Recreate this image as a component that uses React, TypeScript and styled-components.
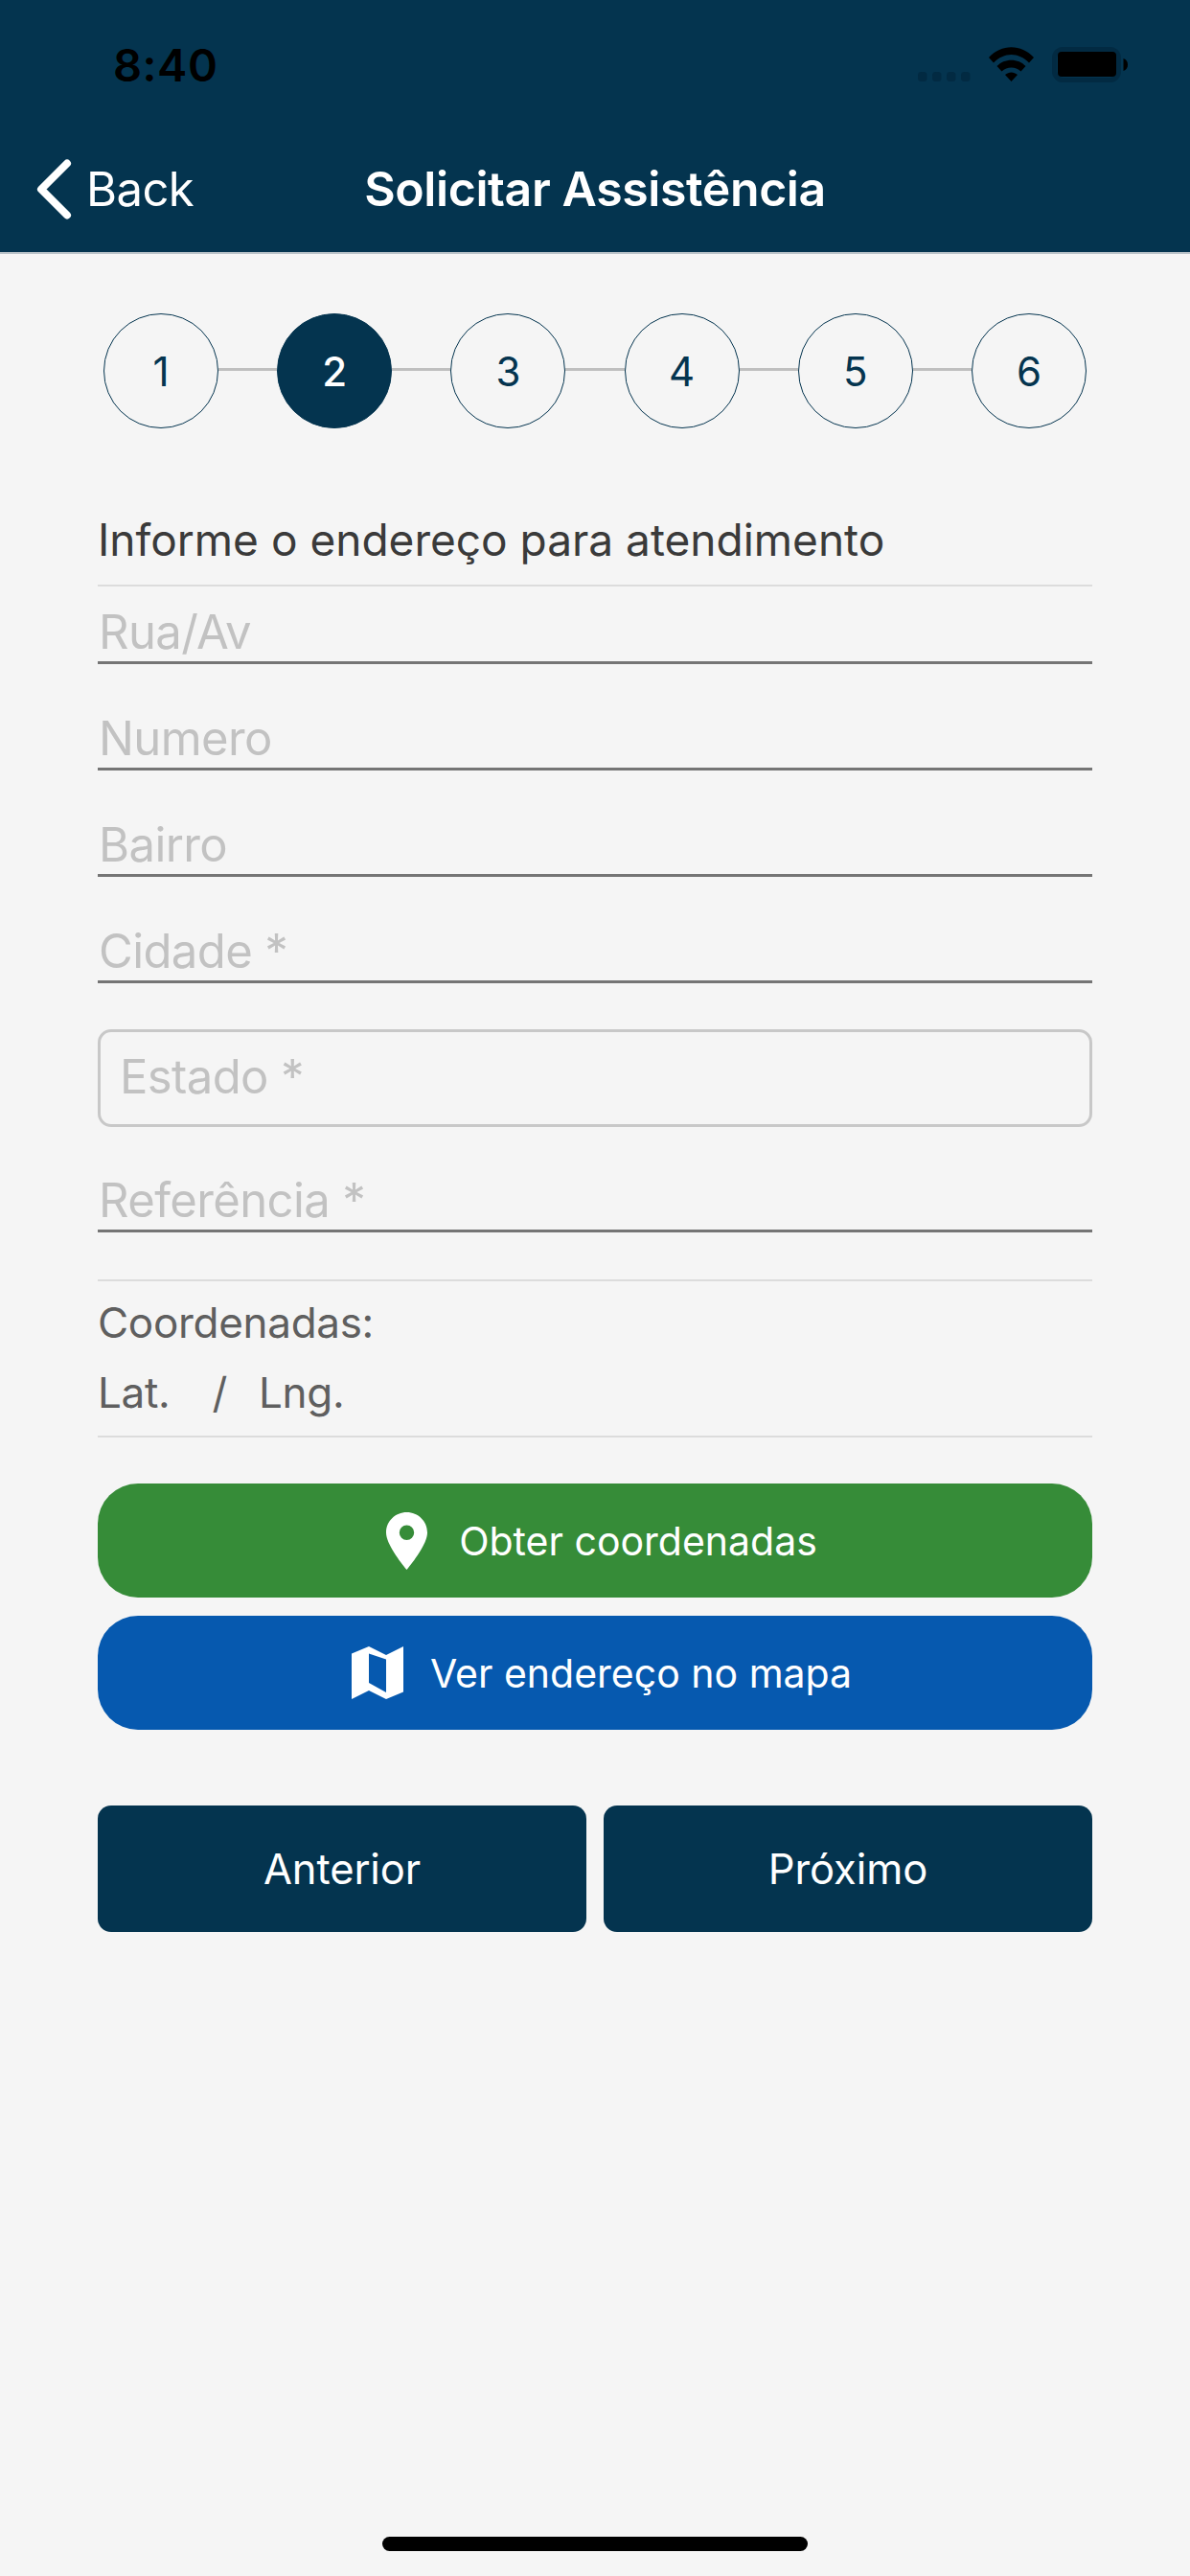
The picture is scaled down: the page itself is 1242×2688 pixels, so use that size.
import React from "react";
import styled, { createGlobalStyle } from "styled-components";

const Global = createGlobalStyle`
  html, body { margin: 0; padding: 0; background: #f5f5f5; }
  * { box-sizing: border-box; }
  body { font-family: Inter, "Liberation Sans", sans-serif; }
`;

const Screen = styled.div`
  position: relative;
  width: 1242px;
  height: 2688px;
  background: #f5f5f5;
  overflow: hidden;
  display: flex;
  flex-direction: column;
`;

const Header = styled.header`
  height: 265px;
  background: #04344f;
  border-bottom: 2px solid #b9c2c8;
  display: flex;
  flex-direction: column;
`;

const StatusBar = styled.div`
  height: 132px;
  display: flex;
  align-items: flex-start;
  justify-content: space-between;
  padding: 42px 65px 0 118px;
`;

const Clock = styled.span`
  font-size: 47px;
  line-height: 52px;
  font-weight: 600;
  color: #000;
  letter-spacing: 0.5px;
`;

const StatusIcons = styled.div`
  display: flex;
  align-items: flex-start;
  padding-top: 7px;
`;

const NavBar = styled.div`
  position: relative;
  display: flex;
  align-items: center;
  height: 132px;
  padding: 0 0 0 38px;
`;

const BackLink = styled.div`
  display: flex;
  align-items: center;
  gap: 15px;
  color: #fff;
  font-size: 49px;
  letter-spacing: -0.6px;
  font-weight: 400;
`;

const NavTitle = styled.div`
  position: absolute;
  left: 0;
  right: 0;
  text-align: center;
  color: #fff;
  font-size: 50px;
  font-weight: 600;
  letter-spacing: -0.4px;
`;

const Body = styled.main`
  padding: 62px 102px 0;
  display: flex;
  flex-direction: column;
`;

const Stepper = styled.ol`
  list-style: none;
  margin: 0 0 0 6px;
  padding: 0;
  display: flex;
  align-items: center;
`;

const StepCircle = styled.li<{ $active?: boolean }>`
  width: 120px;
  height: 120px;
  flex: none;
  border-radius: 50%;
  border: 1.5px solid #04344f;
  background: ${(p) => (p.$active ? "#04344f" : "transparent")};
  color: ${(p) => (p.$active ? "#fff" : "#04344f")};
  font-size: 42px;
  font-weight: ${(p) => (p.$active ? 500 : 400)};
  display: flex;
  align-items: center;
  justify-content: center;
`;

const StepLine = styled.li`
  width: 61.2px;
  height: 3px;
  margin-top: -3px;
  flex: none;
  background: #bfbfbf;
`;

const Heading = styled.h2`
  margin: 88px 0 0;
  height: 77px;
  padding-bottom: 20px;
  display: flex;
  align-items: flex-end;
  font-size: 46px;
  line-height: 54px;
  font-weight: 400;
  color: #3a3a3a;
  border-bottom: 2px solid #dcdcdc;
  letter-spacing: 0;
  white-space: nowrap;
`;

const UnderlineField = styled.div<{ $gap: number; $first?: boolean }>`
  height: ${(p) => (p.$first ? 81 : 80)}px;
  margin-top: ${(p) => p.$gap}px;
  padding: 0 0 0 1px;
  display: flex;
  align-items: flex-end;
  border-bottom: 3px solid #757575;
  font-size: 49px;
  line-height: 60px;
  color: #c2c2c2;
  letter-spacing: -0.6px;
`;

const BoxField = styled.div`
  height: 102px;
  margin-top: 48px;
  padding: 0 20px 3px;
  display: flex;
  align-items: center;
  border: 3px solid #c8c8c8;
  border-radius: 14px;
  font-size: 49px;
  color: #c2c2c2;
  letter-spacing: -0.6px;
`;

const CoordBlock = styled.section`
  margin-top: 49px;
  height: 165px;
  padding-top: 15px;
  border-top: 2px solid #dcdcdc;
  border-bottom: 2px solid #dcdcdc;
  display: flex;
  flex-direction: column;
  gap: 17px;
  font-size: 44px;
  line-height: 56px;
  color: #5f5f5f;
  letter-spacing: -0.3px;
`;

const CoordRow = styled.div`
  display: flex;
`;

const CoordSlash = styled.span`
  margin: 0 33px 0 44px;
`;

const ActionButton = styled.div<{ $color: string; $gap: number; $iconGap: number }>`
  height: 119px;
  margin-top: ${(p) => p.$gap}px;
  padding-left: 14px;
  background: ${(p) => p.$color};
  border-radius: 42px;
  display: flex;
  align-items: center;
  justify-content: center;
  gap: ${(p) => p.$iconGap}px;
  color: #fff;
  font-size: 41px;
  letter-spacing: 0;
`;

const NavButtons = styled.div`
  margin-top: 79px;
  display: grid;
  grid-template-columns: 1fr 1fr;
  gap: 18px;
`;

const NavButton = styled.div`
  height: 132px;
  background: #04344f;
  border-radius: 14px;
  color: #fff;
  font-size: 43.5px;
  letter-spacing: -0.1px;
  display: flex;
  align-items: center;
  justify-content: center;
`;

const HomeIndicator = styled.div`
  position: absolute;
  left: 399px;
  bottom: 26px;
  width: 444px;
  height: 15px;
  border-radius: 8px;
  background: #000;
`;

const Chevron = () => (
  <svg width="37" height="63" viewBox="0 0 37 63">
    <path d="M32 4.5 5 31.5l27 27" fill="none" stroke="#fff" strokeWidth="8" strokeLinecap="round" strokeLinejoin="round" />
  </svg>
);

const StatusGlyphs = () => (
  <svg width="219" height="37" viewBox="0 0 219 37">
    <g fill="#022a42">
      <rect x="0" y="26" width="9.5" height="10" rx="3.5" />
      <rect x="15" y="26" width="9.5" height="10" rx="3.5" />
      <rect x="30" y="26" width="9.5" height="10" rx="3.5" />
      <rect x="45" y="26" width="9.5" height="10" rx="3.5" />
    </g>
    <path
      d="M74 11C87-3.5 108-3.5 121 11l-5 5.5C105 5 90 5 79 16.5ZM82.500 20C90 11.500 105 11.500 112.500 20l-5 5.500C102 20 93 20 87.500 25.500ZM91 29c4-3.500 9-3.500 13 0l-6.500 7Z"
      fill="#000"
    />
    <rect x="142.500" y="2.500" width="67" height="32" rx="9" fill="none" stroke="#022a42" strokeWidth="5" />
    <rect x="146" y="5" width="61" height="26" rx="4" fill="#000" />
    <path d="M214.500 12c3 1 4.500 3.500 4.500 6.500s-1.500 5.500-4.500 6.500Z" fill="#000" />
  </svg>
);

const Pin = () => (
  <svg width="43" height="60" viewBox="0 0 43 60">
    <path
      fillRule="evenodd"
      fill="#fff"
      d="M21.5 0C33.4 0 43 9.3 43 21.2 43 33 28 52 21.5 60 15 52 0 33 0 21.2 0 9.3 9.6 0 21.5 0Zm0 13.5a7.7 7.7 0 1 0 0 15.4 7.7 7.7 0 0 0 0-15.4Z"
    />
  </svg>
);

const MapIcon = () => (
  <svg width="54" height="55" viewBox="0 0 54 55">
    <path
      fillRule="evenodd"
      fill="#fff"
      d="M0 7.5 18 0l18 9L54 0v47.5L36 55l-18-9L0 55ZM18 7.5V38l18 10V13.5Z"
    />
  </svg>
);

const steps = [1, 2, 3, 4, 5, 6];
const upperFields = ["Rua/Av", "Numero", "Bairro", "Cidade *"];

export default function App() {
  return (
    <Screen>
      <Global />
      <Header>
        <StatusBar>
          <Clock>8:40</Clock>
          <StatusIcons>
            <StatusGlyphs />
          </StatusIcons>
        </StatusBar>
        <NavBar>
          <BackLink>
            <Chevron />
            Back
          </BackLink>
          <NavTitle>Solicitar Assistência</NavTitle>
        </NavBar>
      </Header>
      <Body>
        <Stepper>
          {steps.map((n) => (
            <React.Fragment key={n}>
              <StepCircle $active={n === 2}>{n}</StepCircle>
              {n < 6 && <StepLine />}
            </React.Fragment>
          ))}
        </Stepper>
        <Heading>Informe o endereço para atendimento</Heading>
        {upperFields.map((f, i) => (
          <UnderlineField key={f} $gap={i === 0 ? 0 : 31} $first={i === 0}>
            {f}
          </UnderlineField>
        ))}
        <BoxField>Estado *</BoxField>
        <UnderlineField $gap={30}>Referência *</UnderlineField>
        <CoordBlock>
          <span>Coordenadas:</span>
          <CoordRow>
            <span>Lat.</span>
            <CoordSlash>/</CoordSlash>
            <span>Lng.</span>
          </CoordRow>
        </CoordBlock>
        <ActionButton $color="#368c38" $gap={48} $iconGap={33}>
          <Pin />
          Obter coordenadas
        </ActionButton>
        <ActionButton $color="#0659af" $gap={19} $iconGap={28}>
          <MapIcon />
          Ver endereço no mapa
        </ActionButton>
        <NavButtons>
          <NavButton>Anterior</NavButton>
          <NavButton>Próximo</NavButton>
        </NavButtons>
      </Body>
      <HomeIndicator />
    </Screen>
  );
}
